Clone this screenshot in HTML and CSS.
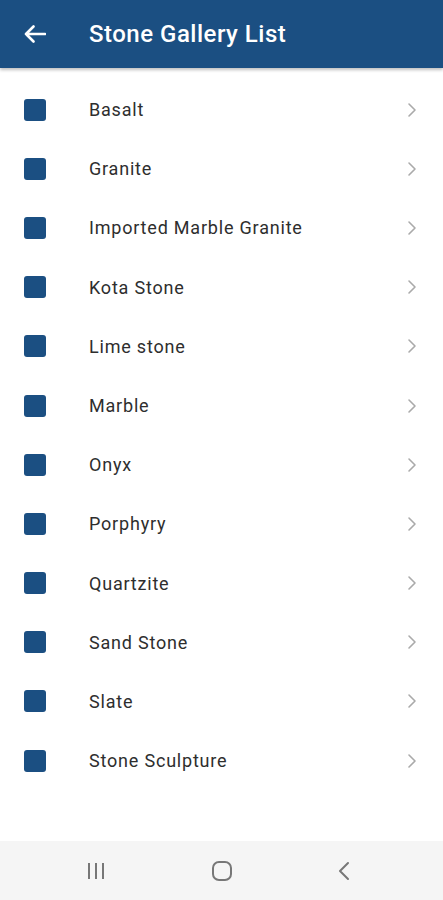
FILE: index.html
```html
<!DOCTYPE html>
<html lang="en">
<head>
    <meta charset="UTF-8">
    <meta name="viewport" content="width=device-width, initial-scale=1.0">
    <title>Stone Gallery List</title>
    <link rel="stylesheet" href="styles.css">
</head>
<body>
    <header class="topbar">
        <svg class="back" width="22" height="18" viewBox="0 0 22 18">
            <path d="M21 9H2M9.5 1.5L2 9l7.5 7.5" fill="none" stroke="#fff" stroke-width="2.6" stroke-linecap="round" stroke-linejoin="round"/>
        </svg>
        <h1>Stone Gallery List</h1>
    </header>
    <ul class="list" id="list"></ul>
    <nav class="sysnav">
        <svg width="20" height="18" viewBox="0 0 20 18">
            <path d="M3 1v16M10 1v16M17 1v16" stroke="#777" stroke-width="2"/>
        </svg>
        <svg width="22" height="22" viewBox="0 0 22 22">
            <rect x="2" y="2" width="18" height="18" rx="6" fill="none" stroke="#777" stroke-width="2"/>
        </svg>
        <svg width="14" height="20" viewBox="0 0 14 20">
            <path d="M11 2L3 10l8 8" fill="none" stroke="#777" stroke-width="2" stroke-linecap="round" stroke-linejoin="round"/>
        </svg>
    </nav>
    <script>
        const stones = [
            'Basalt', 'Granite', 'Imported Marble Granite', 'Kota Stone',
            'Lime stone', 'Marble', 'Onyx', 'Porphyry', 'Quartzite',
            'Sand Stone', 'Slate', 'Stone Sculpture'
        ];

        const chevron = `<svg class="chev" width="10" height="16" viewBox="0 0 10 16">
            <path d="M2 2l6 6-6 6" fill="none" stroke="#aaa" stroke-width="1.6" stroke-linecap="round" stroke-linejoin="round"/>
        </svg>`;

        document.getElementById('list').innerHTML = stones.map(name => `
            <li><span class="box"></span><span class="name">${name}</span>${chevron}</li>
        `).join('');
    </script>
</body>
</html>
```
FILE: styles.css
```css
body {
    margin: 0;
    font-family: Roboto, "Noto Sans", sans-serif;
    background-color: #fff;
    height: 900px;
    display: flex;
    flex-direction: column;
}
.topbar {
    height: 68px;
    background-color: #1b4f82;
    display: flex;
    align-items: center;
    box-shadow: 0 2px 3px rgba(0, 0, 0, 0.25);
    flex-shrink: 0;
}
.back {
    margin-left: 24px;
    margin-right: 43px;
}
.topbar h1 {
    margin: 0;
    color: #fff;
    font-size: 24px;
    font-weight: 500;
    letter-spacing: 0.5px;
}
.list {
    list-style: none;
    margin: 0;
    padding: 12px 0 0;
    flex: 1;
}
.list li {
    height: 59.2px;
    display: flex;
    align-items: center;
}
.box {
    width: 22px;
    height: 22px;
    margin-left: 24px;
    margin-right: 43px;
    border-radius: 3px;
    background-color: #1b4f82;
}
.name {
    flex: 1;
    font-size: 18px;
    letter-spacing: 0.8px;
    color: #2e2e2e;
}
.chev {
    margin-right: 26px;
}
.sysnav {
    height: 59px;
    background-color: #f5f5f5;
    display: flex;
    align-items: center;
    justify-content: space-between;
    padding: 0 92px 0 86px;
    flex-shrink: 0;
}
```
